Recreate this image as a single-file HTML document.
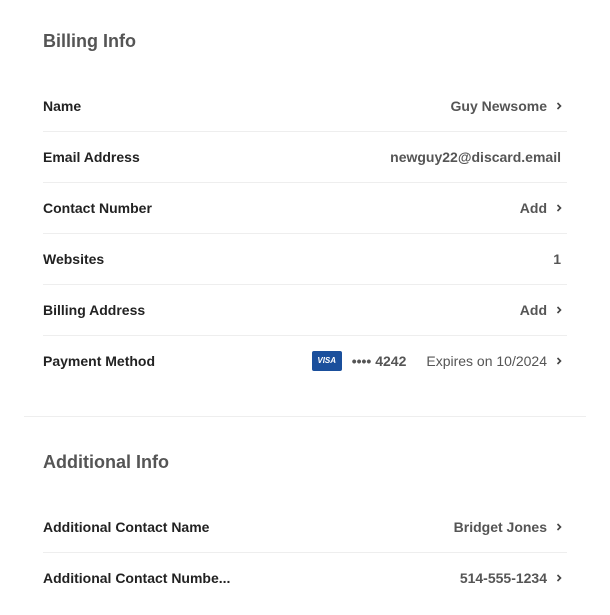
<!DOCTYPE html>
<html><head><style>
body{margin:0;background:#fff;font-family:"Liberation Sans",sans-serif;width:610px;height:615px;overflow:hidden;position:relative}
h2{position:absolute;left:43px;margin:0;font-size:18px;font-weight:bold;color:#555;line-height:22px}
.row{position:absolute;left:43px;width:520px;height:51px;display:flex;align-items:center;justify-content:space-between;font-size:14px}
.row.b:after{content:"";position:absolute;left:0;width:524px;bottom:-1px;border-bottom:1px solid #eee}
.l{font-weight:bold;color:#222}
.v{font-weight:bold;color:#555;display:flex;align-items:center}
.c{display:inline-block;width:16px;height:10px}
.c svg{display:block;margin-left:9px}
.nc{margin-right:2px}
.visa{display:inline-block;width:30px;height:20px;background:#1a4f9c;border-radius:2px;color:#fff;font-size:8px;font-weight:bold;font-style:italic;text-align:center;line-height:20px;margin-right:10px}
.sep{position:absolute;left:24px;width:562px;top:416px;border-top:1px solid #eee}
</style></head><body>
<h2 style="top:30px">Billing Info</h2>
<div class="row b" style="top:80px"><span class="l">Name</span><span class="v">Guy Newsome<span class="c"><svg width="6" height="10" viewBox="0 0 6 10"><path d="M1.5 2L4.5 5L1.5 8" fill="none" stroke="#444" stroke-width="1.6"/></svg></span></span></div>
<div class="row b" style="top:131px"><span class="l">Email Address</span><span class="v nc">newguy22@discard.email</span></div>
<div class="row b" style="top:182px"><span class="l">Contact Number</span><span class="v">Add<span class="c"><svg width="6" height="10" viewBox="0 0 6 10"><path d="M1.5 2L4.5 5L1.5 8" fill="none" stroke="#444" stroke-width="1.6"/></svg></span></span></div>
<div class="row b" style="top:233px"><span class="l">Websites</span><span class="v nc">1</span></div>
<div class="row b" style="top:284px"><span class="l">Billing Address</span><span class="v">Add<span class="c"><svg width="6" height="10" viewBox="0 0 6 10"><path d="M1.5 2L4.5 5L1.5 8" fill="none" stroke="#444" stroke-width="1.6"/></svg></span></span></div>
<div class="row" style="top:335px"><span class="l">Payment Method</span><span class="v"><span class="visa">VISA</span>•••• 4242<span style="font-weight:normal;margin-left:20px">Expires on 10/2024</span><span class="c"><svg width="6" height="10" viewBox="0 0 6 10"><path d="M1.5 2L4.5 5L1.5 8" fill="none" stroke="#444" stroke-width="1.6"/></svg></span></span></div>
<div class="sep"></div>
<h2 style="top:451px">Additional Info</h2>
<div class="row b" style="top:501px"><span class="l">Additional Contact Name</span><span class="v">Bridget Jones<span class="c"><svg width="6" height="10" viewBox="0 0 6 10"><path d="M1.5 2L4.5 5L1.5 8" fill="none" stroke="#444" stroke-width="1.6"/></svg></span></span></div>
<div class="row" style="top:552px"><span class="l">Additional Contact Numbe...</span><span class="v">514-555-1234<span class="c"><svg width="6" height="10" viewBox="0 0 6 10"><path d="M1.5 2L4.5 5L1.5 8" fill="none" stroke="#444" stroke-width="1.6"/></svg></span></span></div>
</body></html>
